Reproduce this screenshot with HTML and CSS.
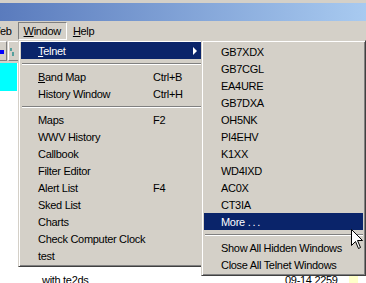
FILE: index.html
```html
<!DOCTYPE html>
<html>
<head>
<meta charset="utf-8">
<link rel="stylesheet" href="styles.css">
</head>
<body>
<div class="screen">
  <div class="frame-top"></div>
  <div class="titlebar"></div>
  <div class="menubar">
    <span class="mb-item first">Web</span>
    <span class="mb-item pressed"><u>W</u>indow</span>
    <span class="mb-item"><u>H</u>elp</span>
  </div>
  <div class="toolbar">
    <div class="tbtn"><span class="blue-sq"></span></div>
    <div class="tbtn">
      <svg class="glyph" width="5" height="8" viewBox="0 0 5 8"><path d="M1 0 L1 3 M3 4 L3 8" stroke="#008080" stroke-width="1.2" fill="none"/></svg>
    </div>
  </div>
  <div class="content">
    <div class="cyan"></div>
    <div class="row">
      <span class="c-pad"></span>
      <span class="c-name">with te2ds</span>
      <span class="c-time">09-14 2259</span>
      <span class="note"></span>
    </div>
  </div>

  <div class="menu main">
    <div class="mi hl"><span class="lbl"><u>T</u>elnet</span><span class="arrow"></span></div>
    <div class="sep"></div>
    <div class="mi"><span class="lbl"><u>B</u>and Map</span><span class="key">Ctrl+B</span></div>
    <div class="mi"><span class="lbl">History Window</span><span class="key">Ctrl+H</span></div>
    <div class="sep"></div>
    <div class="mi"><span class="lbl">Maps</span><span class="key">F2</span></div>
    <div class="mi"><span class="lbl">WWV History</span></div>
    <div class="mi"><span class="lbl">Callbook</span></div>
    <div class="mi"><span class="lbl">Filter Editor</span></div>
    <div class="mi"><span class="lbl">Alert List</span><span class="key">F4</span></div>
    <div class="mi"><span class="lbl">Sked List</span></div>
    <div class="mi"><span class="lbl">Charts</span></div>
    <div class="mi"><span class="lbl">Check Computer Clock</span></div>
    <div class="mi"><span class="lbl">test</span></div>
  </div>

  <div class="menu sub">
    <div class="mi">GB7XDX</div>
    <div class="mi">GB7CGL</div>
    <div class="mi">EA4URE</div>
    <div class="mi">GB7DXA</div>
    <div class="mi">OH5NK</div>
    <div class="mi">PI4EHV</div>
    <div class="mi">K1XX</div>
    <div class="mi">WD4IXD</div>
    <div class="mi">AC0X</div>
    <div class="mi">CT3IA</div>
    <div class="mi hl">More&nbsp;<span class="dots">...</span></div>
    <div class="sep"></div>
    <div class="mi">Show All Hidden Windows</div>
    <div class="mi">Close All Telnet Windows</div>
  </div>

  <svg class="cursor" width="13" height="21" viewBox="0 0 13 21">
    <path d="M0.5 0.5 L0.5 16.5 L4.5 12.5 L7.5 19.5 L9.5 18.5 L6.5 11.5 L11.5 11.5 Z" fill="#fff" stroke="#000" stroke-width="1" stroke-linejoin="miter"/>
  </svg>
</div>
</body>
</html>
```

FILE: styles.css
```css
html, body {
  margin: 0;
  padding: 0;
  background: #fff;
}
body {
  font-family: "Liberation Sans", Arial, sans-serif;
  font-size: 11px;
  letter-spacing: -0.3px;
  color: #000;
}
.screen {
  position: relative;
  width: 366px;
  height: 283px;
  overflow: hidden;
  display: flex;
  flex-direction: column;
  background: #fff;
}
.frame-top {
  height: 3px;
  background: #d4d0c8;
}
.titlebar {
  height: 18px;
  background: linear-gradient(to right, #5a7bbd, #a8caf0);
}
.menubar {
  height: 19px;
  background: #d4d0c8;
  display: flex;
  align-items: flex-start;
  white-space: nowrap;
}
.mb-item {
  margin-top: 1px;
  height: 16px;
  line-height: 16px;
  padding: 0 5px;
  border: 1px solid transparent;
}
.mb-item.first {
  margin-left: -16px;
}
.mb-item.pressed {
  border-color: #808080 #fff #fff #808080;
}
u {
  text-decoration: underline;
  text-underline-offset: 1px;
}
.toolbar {
  height: 23px;
  background: #d4d0c8;
  display: flex;
  gap: 1px;
  padding-top: 1px;
  box-sizing: border-box;
  margin-left: -12px;
}
.tbtn {
  width: 19px;
  height: 20px;
  border: 1px solid;
  border-color: #fff #808080 #808080 #fff;
  box-sizing: border-box;
  display: flex;
  align-items: center;
}
.blue-sq {
  width: 4px;
  height: 4px;
  background: #0000ff;
  margin-left: 11px;
  margin-top: 2px;
}
.glyph {
  margin-left: 1px;
  margin-top: 2px;
}
.content {
  flex: 1;
  display: flex;
  flex-direction: column;
  background: #fff;
}
.cyan {
  width: 17px;
  height: 28px;
  background: #00ffff;
}
.row {
  margin-top: auto;
  height: 9px;
  line-height: 13px;
  display: grid;
  grid-template-columns: 42px 243px 64px 9px;
  white-space: nowrap;
}
.note {
  background: #ffffc8;
  height: 9px;
}

.menu {
  position: absolute;
  top: 40px;
  box-sizing: border-box;
  background: #d4d0c8;
  border: 1px solid;
  border-color: #d4d0c8 #404040 #404040 #d4d0c8;
  box-shadow: inset 1px 1px #fff, inset -1px -1px #808080;
  white-space: nowrap;
}
.menu.main {
  left: 18px;
  width: 186px;
  padding: 1px 2px 2px 2px;
}
.menu.sub {
  left: 201px;
  width: 165px;
  padding: 2px 2px 2px 2px;
}
.mi {
  height: 17px;
  display: flex;
  align-items: center;
  padding-left: 17px;
}
.mi .lbl {
  width: 115px;
}
.mi.hl {
  background: #0a246a;
  color: #fff;
}
.dots {
  letter-spacing: 1.8px;
}
.arrow {
  margin-left: auto;
  margin-right: 4px;
  width: 0;
  height: 0;
  border-left: 4px solid currentColor;
  border-top: 4px solid transparent;
  border-bottom: 4px solid transparent;
}
.sep {
  height: 9px;
  padding-top: 4px;
  box-sizing: border-box;
}
.sep::before {
  content: "";
  display: block;
  margin: 0 0 0 1px;
  border-top: 1px solid #808080;
  border-bottom: 1px solid #fff;
}
.cursor {
  position: absolute;
  left: 351px;
  top: 229px;
}
```
